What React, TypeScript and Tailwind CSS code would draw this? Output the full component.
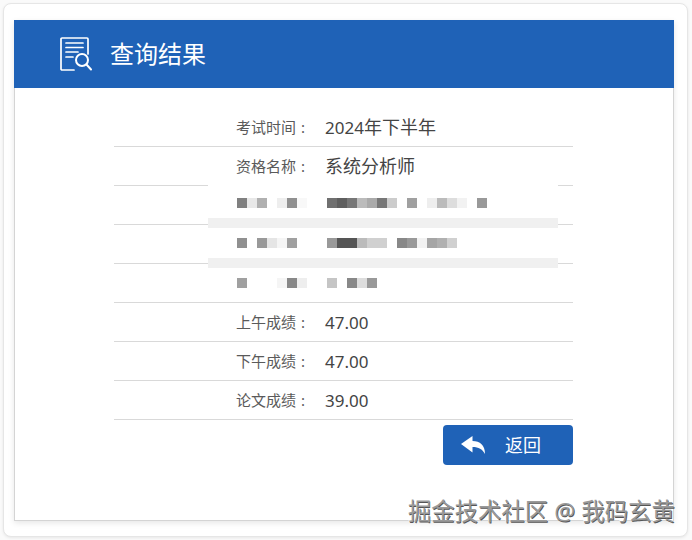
import type { ReactNode } from "react";

const font = { fontFamily: '"Noto Sans", "Noto Sans CJK SC", sans-serif' };

type Mosaic = [number, string][];

const row3: Mosaic = [[0,"#808080"],[1,"#e8e8e8"],[2,"#b0b0b0"],[4,"#eeeeee"],[5,"#909090"],[6,"#f8f8f8"],[9,"#707070"],[10,"#5f5f5f"],[11,"#777777"],[12,"#bbbbbb"],[13,"#aaaaaa"],[14,"#777777"],[15,"#cccccc"],[17,"#a0a0a0"],[19,"#eeeeee"],[20,"#bbbbbb"],[21,"#dddddd"],[22,"#f2f2f2"],[24,"#999999"]];
const row4: Mosaic = [[0,"#909090"],[2,"#999999"],[3,"#e5e5e5"],[4,"#f5f5f5"],[5,"#a0a0a0"],[9,"#999999"],[10,"#555555"],[11,"#555555"],[12,"#bbbbbb"],[13,"#d0d0d0"],[14,"#d0d0d0"],[16,"#888888"],[17,"#999999"],[18,"#f2f2f2"],[19,"#a5a5a5"],[20,"#b0b0b0"],[21,"#d0d0d0"]];
const row5: Mosaic = [[0,"#a0a0a0"],[4,"#f5f5f5"],[5,"#888888"],[6,"#eeeeee"],[9,"#c5c5c5"],[11,"#888888"],[12,"#dddddd"],[13,"#999999"]];

function Blocks({ cells }: { cells: Mosaic }) {
  const byCol = new Map(cells);
  return (
    <div className="flex blur-[0.4px]">
      {Array.from({ length: 25 }, (_, i) => (
        <div key={i} className="h-[10px] w-[10px]" style={{ backgroundColor: byCol.get(i) ?? "transparent" }} />
      ))}
    </div>
  );
}

function Num({ children }: { children: ReactNode }) {
  return <span className="text-[17px]">{children}</span>;
}

function Row({ label, value }: { label: string; value: ReactNode }) {
  return (
    <div className="flex h-[39px] items-center border-b border-[#d9d9d9]">
      <div className="flex w-[192px] justify-end text-[15px] text-[#5a5a5a]">
        <span>{label}</span>
        <span className="ml-[5px] w-[5px]">:</span>
      </div>
      <div className="ml-[19px] text-[18px] text-[#444444]">{value}</div>
    </div>
  );
}

function MaskRow({ children }: { children: ReactNode }) {
  return <div className="relative h-[39px] border-b border-[#d9d9d9]">{children}</div>;
}

export default function App() {
  return (
    <div className="h-[540px] w-[692px] overflow-hidden bg-[#fafafa] pl-[3px] pt-[3px]" style={font}>
      <div className="relative h-[534px] w-[685px] rounded-[8px] border border-[#e6e6e6] bg-white pl-[10px] pt-[16px] shadow-[0_1px_3px_rgba(0,0,0,0.08)]">
        <div className="h-[501px] w-[660px] shadow-[0_2px_6px_rgba(0,0,0,0.1)]">
          <div className="flex h-[68px] items-center bg-[#1f62b7] pl-[46px]">
            <svg width="32" height="35" viewBox="0 0 32 35" fill="none" stroke="#ffffff" strokeWidth="1.7" strokeLinecap="round" strokeLinejoin="round">
              <path d="M14 33H2a1 1 0 0 1-1-1V2a1 1 0 0 1 1-1h25a1 1 0 0 1 1 1v15" />
              <path d="M6 6h17M6 10.5h17M6 15h12M6 20h7" />
              <circle cx="22" cy="23" r="6" strokeWidth="2" />
              <path d="M26.5 27.5l4.500 5" strokeWidth="2" />
            </svg>
            <div className="ml-[18px] text-[24px] leading-none text-white">查询结果</div>
          </div>
          <div className="h-[433px] border border-t-0 border-[#d4d4d4] bg-white pl-[99px] pt-[20px]">
            <div className="w-[459px]">
              <Row label="考试时间" value={<><Num>2024</Num>年下半年</>} />
              <Row label="资格名称" value="系统分析师" />
              <MaskRow>
                <div className="absolute left-[94px] top-[-2px] h-[4px] w-[350px] bg-white" />
                <div className="absolute left-[123px] top-[12px]">
                  <Blocks cells={row3} />
                </div>
                <div className="absolute bottom-[-4px] left-[94px] h-[10px] w-[350px] bg-[#f0f0f0]" />
              </MaskRow>
              <MaskRow>
                <div className="absolute left-[123px] top-[13px]">
                  <Blocks cells={row4} />
                </div>
                <div className="absolute bottom-[-5px] left-[94px] h-[10px] w-[350px] bg-[#f0f0f0]" />
              </MaskRow>
              <MaskRow>
                <div className="absolute left-[123px] top-[14px]">
                  <Blocks cells={row5} />
                </div>
              </MaskRow>
              <Row label="上午成绩" value={<Num>47.00</Num>} />
              <Row label="下午成绩" value={<Num>47.00</Num>} />
              <Row label="论文成绩" value={<Num>39.00</Num>} />
              <div className="mt-[5px] flex justify-end">
                <button className="flex h-[40px] w-[130px] items-center rounded-[4px] bg-[#1f62b7] pl-[18px] text-white">
                  <svg width="24" height="18" viewBox="0 0 24 18" fill="#ffffff">
                    <path d="M0 8 11.5 0v5C19 5 24 9 24 18c-3-5-6-7-12.5-7v5.500z" />
                  </svg>
                  <span className="ml-[20px] text-[18px] leading-none">返回</span>
                </button>
              </div>
            </div>
          </div>
        </div>
        <div className="absolute bottom-[13px] right-[12px] text-[23.4px] leading-none text-[#9a9a9a] [text-shadow:0.6px_0.6px_0.5px_#555555,-0.6px_-0.6px_0_#ffffff]">
          掘金技术社区 @ 我码玄黄
        </div>
      </div>
    </div>
  );
}
